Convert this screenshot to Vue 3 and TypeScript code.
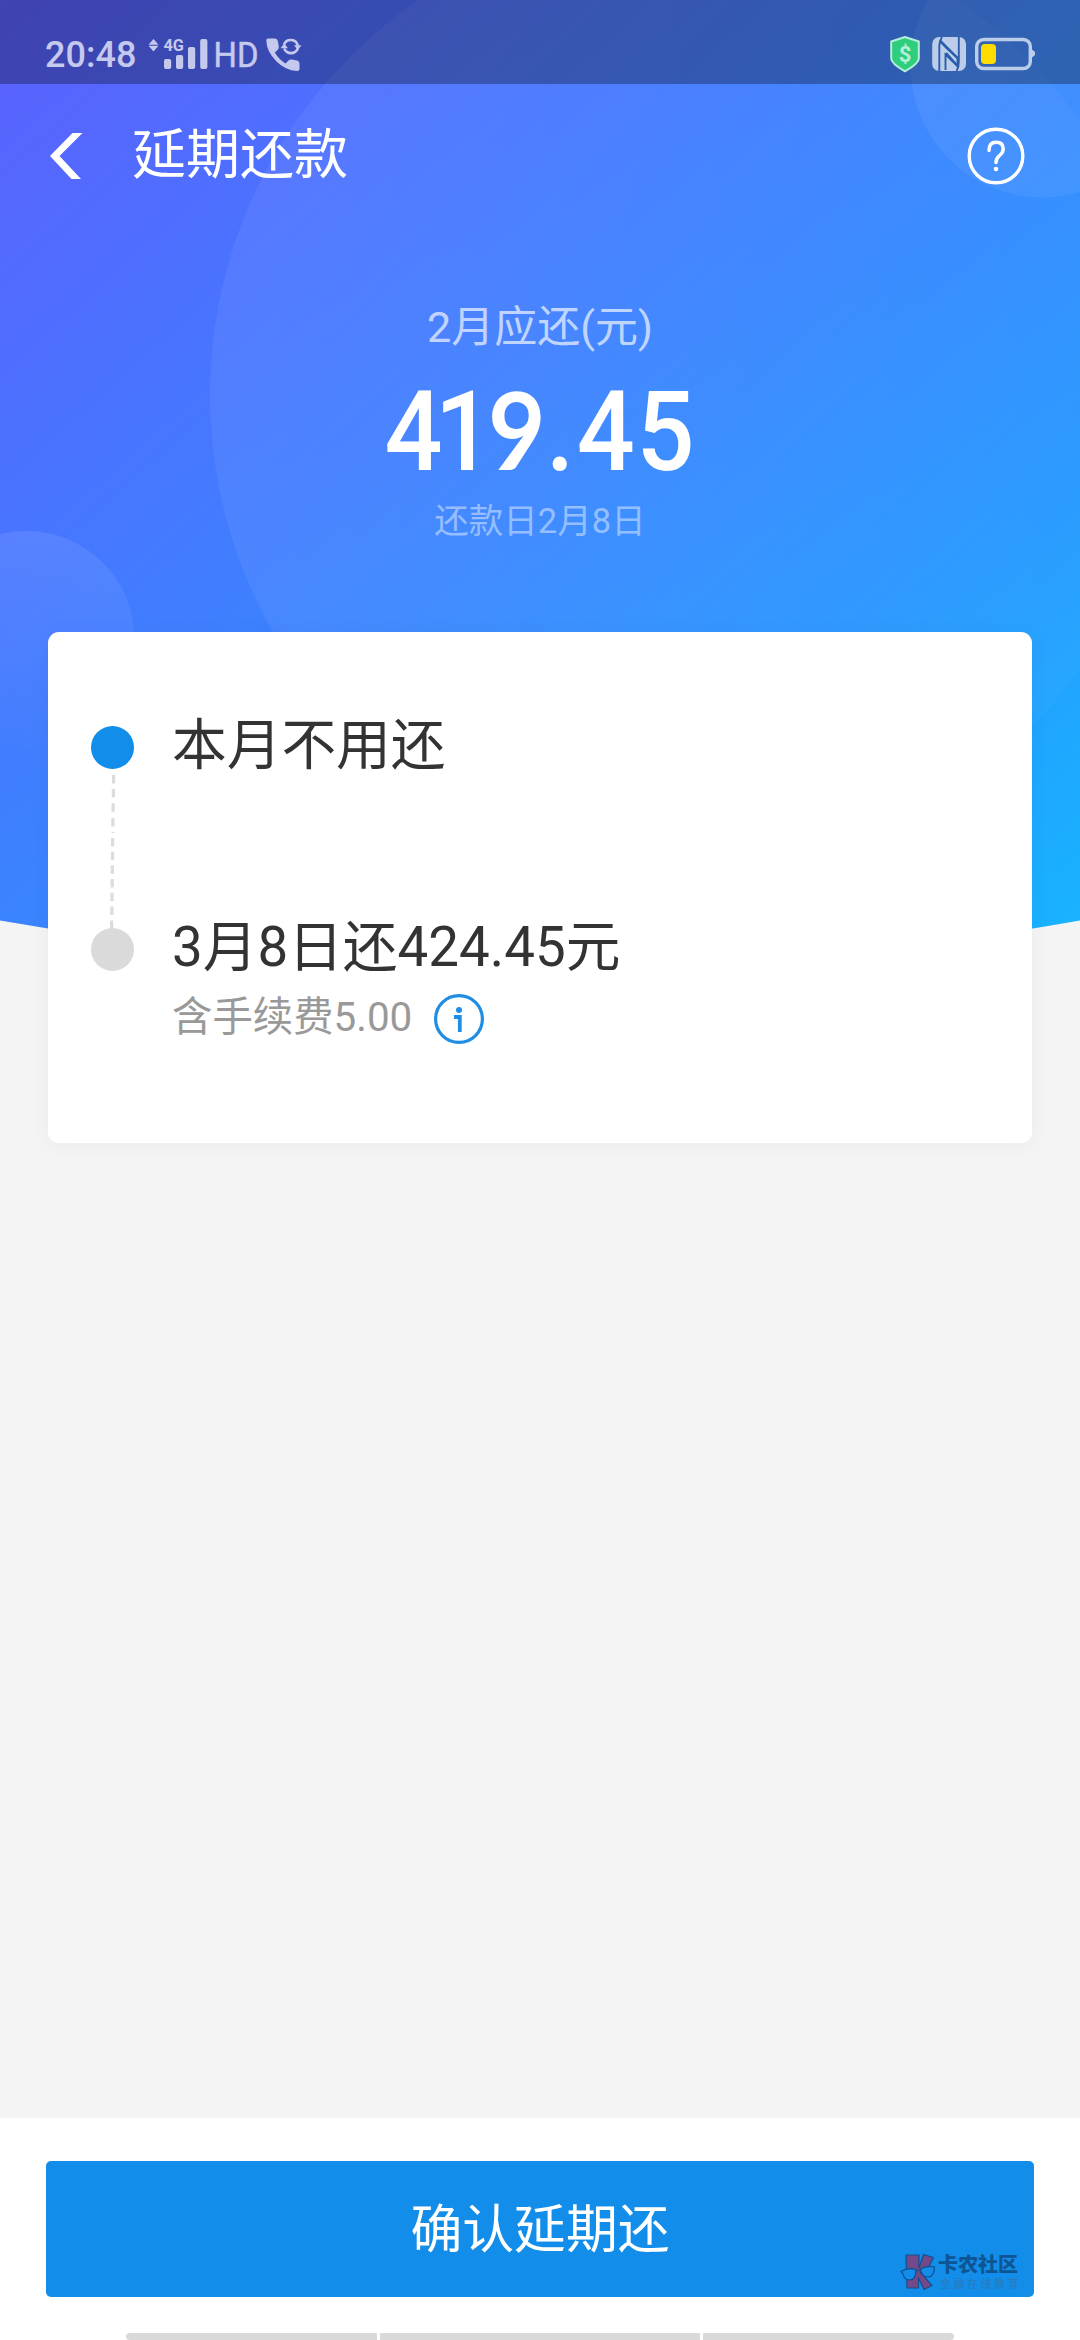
<script setup lang="ts">
interface Step {
  title: string
  note?: string
  active: boolean
}

const steps: Step[] = [
  { title: '本月不用还', active: true },
  { title: '3月8日还424.45元', note: '含手续费5.00', active: false },
]

const dashes: number[][] = [
  [113.6, 775], [113.4, 789], [113.1, 803.3], [112.9, 818],
  [112.6, 838], [112.5, 851.7], [112.3, 865.3], [112.2, 879], [112, 892.7], [111.9, 906.5], [111.7, 920.5],
]
</script>

<template>
  <div class="screen">
    <svg class="backdrop" width="1080" height="980" viewBox="0 0 1080 980">
      <defs>
        <linearGradient id="sky" x1="0" y1="0" x2="1" y2="1">
          <stop offset="0" stop-color="#5c60ff" />
          <stop offset="0.46" stop-color="#3c82ff" />
          <stop offset="0.75" stop-color="#2799ff" />
          <stop offset="1" stop-color="#17b6ff" />
        </linearGradient>
        <linearGradient id="bubble" x1="0" y1="0" x2="0" y2="1">
          <stop offset="0" stop-color="#fff" stop-opacity="0.09" />
          <stop offset="1" stop-color="#fff" stop-opacity="0.01" />
        </linearGradient>
        <linearGradient id="halo" x1="0" y1="0" x2="1" y2="0">
          <stop offset="0" stop-color="#fff" stop-opacity="0.06" />
          <stop offset="1" stop-color="#fff" stop-opacity="0.02" />
        </linearGradient>
        <clipPath id="curve"><path d="M0 0H1080V920.5Q540 1016 0 920.5Z" /></clipPath>
      </defs>
      <g clip-path="url(#curve)">
        <rect width="1080" height="968" fill="url(#sky)" />
        <circle cx="688" cy="395" r="478" fill="url(#halo)" />
        <circle cx="1042" cy="66" r="131.500" fill="#fff" fill-opacity="0.06" />
        <circle cx="26.500" cy="639" r="108" fill="url(#bubble)" />
      </g>
    </svg>

    <header class="status">
      <span class="clock">20:48</span>
      <svg class="signals" width="160" height="84" viewBox="146 0 160 84" fill="#c6c9ee">
        <path d="M153.500 39L158.500 44.800H148.500ZM153.500 51.500L158.500 45.800H148.500Z" />
        <text class="net" x="163.500" y="51.300" textLength="20.500" lengthAdjust="spacingAndGlyphs">4G</text>
        <rect x="164" y="59" width="7.200" height="10" rx="2" />
        <rect x="176" y="55" width="7.200" height="14" rx="2" />
        <rect x="188" y="47" width="7.200" height="22" rx="2" />
        <rect x="200.200" y="39" width="7.200" height="30" rx="2" />
        <text class="hd" x="213.500" y="67" textLength="45" lengthAdjust="spacingAndGlyphs">HD</text>
        <path d="M268 38.500H275Q277.500 38.500 277.800 41L278.800 46.500Q279 48.500 277.500 50L274.800 52.500Q279 59.500 285.500 63.500L288.500 60.500Q290 59.200 292 59.600L297 60.500Q299.500 61 299.500 63.500V68.500Q299.500 71 297 71Q285.500 70.500 276.500 61.500Q266.500 51.500 266.300 40.500Q266.300 38.500 268 38.500Z" />
        <g fill="none" stroke="#c6c9ee" stroke-width="2.600">
          <path d="M284 44.500A7.300 7.300 0 0 1 297.800 45.500M297.800 48.500A7.300 7.300 0 0 1 284.200 48.500" />
        </g>
        <path d="M294 45.300H301.500L297.800 50ZM280.500 48.200H288L284.200 43.400Z" />
      </svg>
      <svg class="badges" width="152" height="84" viewBox="886 0 152 84">
        <path d="M905 37L918.800 41.500V58.500Q918.800 63.500 905 71.300Q891.200 63.500 891.200 58.500V41.500Z" fill="#2fce7d" stroke="#b7eedb" stroke-width="2" stroke-linejoin="round" />
        <text class="dollar" x="905" y="61.500" text-anchor="middle">$</text>
        <rect x="932.200" y="37" width="33.800" height="34" rx="7" fill="#bccdea" />
        <g fill="none" stroke="#2b5dac">
          <path d="M942 37Q939.300 41 939.300 46V71M956.500 71Q958.800 67 958.800 62V37" stroke-width="1.900" />
          <path d="M940 41L946 47.500L957.500 58V66L945.500 54.500V70" stroke-width="1.900" />
          <path d="M940 40.500L958.500 59M946 53L958.500 67" stroke-width="2.400" />
        </g>
        <rect x="976.700" y="39.500" width="53.600" height="29" rx="7" fill="none" stroke="#bccdea" stroke-width="3.400" />
        <path d="M1032 49.500L1035 52V55L1032 57.500Z" fill="#bccdea" />
        <rect x="981" y="44" width="15" height="20" rx="4" fill="#ffdc00" />
      </svg>
    </header>

    <nav class="bar">
      <svg class="back" width="34" height="48" viewBox="0 0 34 48"><path d="M23.500 1H33.500L10.500 24L32 47H22.500L1 24Z" fill="#fff" /></svg>
      <h1 class="title">延期还款</h1>
      <svg class="help" width="58" height="58" viewBox="0 0 58 58" fill="none" stroke="#fff">
        <circle cx="29" cy="29" r="26.800" stroke-width="3.400" />
        <path d="M22 23.500Q22 15.300 29 15.300Q36.200 15.300 36.200 22Q36.200 25.500 32.500 28.500Q29 31.300 29 35.500" stroke-width="3.500" stroke-linecap="round" />
        <circle cx="29" cy="42" r="2.300" fill="#fff" stroke="none" />
      </svg>
    </nav>

    <section class="summary">
      <p class="due">2月应还(元)</p>
      <p class="amount"><span class="four">4</span><span class="one">1</span><span class="nine">9</span><span class="point">.</span><span class="last">4</span>5</p>
      <p class="day">还款日2月8日</p>
    </section>

    <main class="card">
      <svg class="track" width="46" height="230" viewBox="90 724 46 230">
        <path v-for="(d, i) in dashes" :key="i" :d="`M${d[0]} ${d[1]}v8.500`" stroke="#dcdcdc" stroke-width="3.200" />
        <path d="M111.500 832.500h3" stroke="#dcdcdc" stroke-width="1" />
      </svg>
      <div v-for="s in steps" :key="s.title" class="step">
        <i class="dot" :class="{ on: s.active }"></i>
        <div class="words">
          <p class="what">{{ s.title }}</p>
          <div v-if="s.note" class="fee">
            <span>{{ s.note }}</span>
            <svg width="52" height="52" viewBox="0 0 52 52" fill="none" stroke="#1f8de3">
              <circle cx="26" cy="26" r="23.400" stroke-width="3.200" />
              <circle cx="26" cy="17" r="3" fill="#1f8de3" stroke="none" />
              <path d="M21 24H26.800V39" stroke-width="3.800" />
            </svg>
          </div>
        </div>
      </div>
    </main>

    <footer class="foot">
      <button class="confirm">确认延期还</button>
      <div class="pill"><i></i><i></i><i></i></div>
      <div class="mark">
        <svg width="36" height="38" viewBox="0 0 36 38">
          <g fill="#73498a" stroke="#134f8c" stroke-width="1.200" stroke-linejoin="round">
            <path d="M6 2H19V15L23.500 1.500L33.500 4.500L27 17L20.500 19.500L32 32.500L24 36.500L18.500 25V35H7Z" />
          </g>
          <g fill="#128dea" stroke="#134f8c" stroke-width="1.200">
            <path d="M1 18.500Q8 14 16 16.500Q16 27 9.500 27Q4 27 3 20.500ZM20.500 16Q27 12 34.500 14Q34 24 28 24Q21.500 24 20.500 16ZM16 17.500L20.500 17" />
          </g>
        </svg>
        <div>
          <b>卡农社区</b>
          <small>金融在线教育</small>
        </div>
      </div>
    </footer>
  </div>
</template>

<style>
body {
  margin: 0;
}
</style>

<style scoped>
.screen {
  position: relative;
  display: flex;
  flex-direction: column;
  width: 1080px;
  height: 2340px;
  overflow: hidden;
  background: #f4f4f4;
  font-family: Roboto, "Noto Sans CJK SC", sans-serif;
}
svg {
  display: block;
  flex: none;
}
p,
h1 {
  margin: 0;
  font-weight: 400;
  white-space: nowrap;
}
.backdrop {
  position: absolute;
  top: 0;
  left: 0;
}
.status,
.bar,
.summary,
.card {
  position: relative;
  flex: none;
  box-sizing: border-box;
}
.status {
  display: flex;
  height: 84px;
  padding: 0 42px 0 45px;
  background: rgba(0, 0, 0, 0.3);
}
.clock {
  width: 101px;
  margin-top: 13px;
  color: #c6c9ee;
  font-size: 36px;
  font-weight: 500;
  line-height: 84px;
}
.net {
  font: 700 17px Roboto, sans-serif;
}
.hd {
  font: 400 35px Roboto, sans-serif;
  stroke: #c6c9ee;
  stroke-width: 0.500px;
}
.dollar {
  font: 700 22px Roboto, sans-serif;
  fill: #b7eedb;
}
.badges {
  margin-left: auto;
}
.bar {
  display: flex;
  align-items: center;
  height: 144px;
  padding: 0 55px 0 49px;
}
.title {
  flex: 1;
  margin-left: 49px;
  color: #fff;
  font-size: 54px;
  line-height: 60px;
}
.summary {
  display: flex;
  flex-direction: column;
  align-items: center;
  height: 404px;
  padding-top: 69px;
  color: #fff;
}
.due {
  color: rgba(255, 255, 255, 0.67);
  font-size: 43px;
  line-height: 60px;
}
.amount {
  margin-top: 10px;
  font-size: 111px;
  font-weight: 500;
  line-height: 130px;
  transform: scaleX(0.92);
}
.four {
  letter-spacing: -8.400px;
}
.one {
  letter-spacing: -5.400px;
}
.nine {
  font: 700 108px/100px Lato, sans-serif;
  letter-spacing: 0.500px;
}
.point {
  letter-spacing: 2.500px;
}
.last {
  letter-spacing: 2px;
}
.day {
  margin-top: -1px;
  color: rgba(255, 255, 255, 0.45);
  font-size: 34.500px;
  line-height: 50px;
}
.card {
  height: 511px;
  margin: 0 48px;
  padding: 80px 43px 0;
  background: #fff;
  border-radius: 11px;
  box-shadow: 0 2px 22px rgba(0, 0, 0, 0.045);
}
.track {
  position: absolute;
  top: 92px;
  left: 42px;
}
.step {
  position: relative;
  display: flex;
  height: 202px;
}
.dot {
  flex: none;
  width: 43px;
  height: 43px;
  margin-top: 14px;
  border-radius: 50%;
  background: #dadada;
}
.dot.on {
  background: #128dea;
}
.words {
  margin-left: 38px;
}
.what {
  color: #333;
  font-size: 54.700px;
  line-height: 66px;
}
.fee {
  display: flex;
  align-items: center;
  gap: 21px;
  height: 52px;
  margin-top: 13px;
  color: #999;
  font-size: 40.400px;
  line-height: 50px;
}
.fee span {
  margin-top: -2px;
}
.foot {
  position: relative;
  box-sizing: border-box;
  height: 222px;
  margin-top: auto;
  padding: 43px 46px 0;
  background: #fff;
}
.confirm {
  display: block;
  width: 988px;
  height: 136px;
  padding: 0 0 6px;
  border: 0;
  border-radius: 5px;
  background: #128dea;
  color: #fff;
  font: 400 51.800px/130px "Noto Sans CJK SC", sans-serif;
}
.pill {
  display: grid;
  grid-template-columns: 251px 320px 251px;
  gap: 3px;
  width: 828px;
  height: 7px;
  margin: 36px auto 0;
  border-radius: 4px;
  overflow: hidden;
}
.pill i {
  background: #d9d9d9;
}
.mark {
  position: absolute;
  top: 135px;
  left: 900px;
  display: flex;
  gap: 2px;
}
.mark b,
.mark small {
  display: block;
  font-family: "Noto Sans CJK SC", sans-serif;
  white-space: nowrap;
}
.mark b {
  color: #0e5594;
  font-size: 20px;
  font-weight: 900;
  line-height: 22px;
}
.mark small {
  margin-left: 2px;
  color: #287cc0;
  font-size: 11px;
  font-weight: 500;
  letter-spacing: 2.500px;
  line-height: 17px;
}
</style>
